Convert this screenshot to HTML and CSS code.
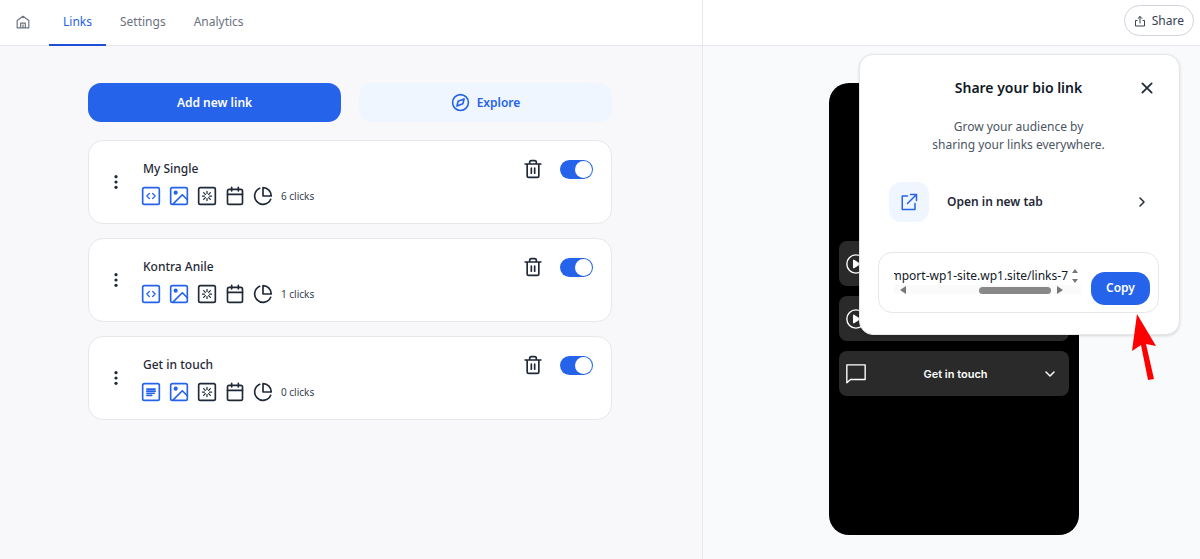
FILE: index.html
```
<!DOCTYPE html>
<html lang="en">
<head>
    <meta charset="UTF-8">
    <meta name="viewport" content="width=device-width, initial-scale=1.0">
    <title>Bio links</title>
    <link rel="stylesheet" href="styles.css">
</head>
<body>
    <!-- Icon set -->
    <svg class="sprite" aria-hidden="true">
        <symbol id="i-home" viewBox="0 0 24 24"><path d="M2 9.500 12 2l10 7.500V22H2zM8 22v-8h8v8M12 22v-5"/></symbol>
        <symbol id="i-compass" viewBox="0 0 24 24"><circle cx="12" cy="12" r="10"/><path d="M16.500 7.500 15 13.500l-7.500 3 1.500-6z"/></symbol>
        <symbol id="i-share" viewBox="0 0 24 24"><path d="M6 11H3v11h18V11h-3M12 16V3M8 7l4-4 4 4"/></symbol>
        <symbol id="i-code" viewBox="0 0 24 24"><rect x="2" y="2" width="20" height="20" rx="2"/><path d="M10 9l-3 3 3 3M14 9l3 3-3 3" stroke-width="1.500"/></symbol>
        <symbol id="i-text" viewBox="0 0 24 24"><rect x="2" y="2" width="20" height="20" rx="2"/><path d="M7 8.500h10M7 11h10M7 13.500h9M7 16h6"/></symbol>
        <symbol id="i-image" viewBox="0 0 24 24"><rect x="2" y="2" width="20" height="20" rx="2"/><circle cx="8" cy="8" r="1.500" fill="currentColor"/><path d="M5 21.500 16 10.500l6 6"/></symbol>
        <symbol id="i-spark" viewBox="0 0 24 24"><rect x="2" y="2" width="20" height="20" rx="2"/><path d="M12 6.500v2.500M12 15v2.500M6.500 12h2.500M15 12h2.500M8 8l2 2M14 14l2 2M8 16l2-2M14 10l2-2" stroke-width="1.500"/></symbol>
        <symbol id="i-calendar" viewBox="0 0 24 24"><rect x="3" y="4" width="18" height="18" rx="2"/><path d="M3 10h18M8 1.500V6M16 1.500V6"/></symbol>
        <symbol id="i-pie" viewBox="0 0 24 24"><path d="M21.200 15.900A10 10 0 1 1 8 2.800M22 12A10 10 0 0 0 12 2v10z"/></symbol>
        <symbol id="i-trash" viewBox="0 0 24 24"><path d="M2.500 6h19M19 6v14a2 2 0 0 1-2 2H7a2 2 0 0 1-2-2V6M8 6V4a2 2 0 0 1 2-2h4a2 2 0 0 1 2 2v2M10 11v6M14 11v6"/></symbol>
        <symbol id="i-dots" viewBox="0 0 24 24"><g fill="currentColor" stroke="none"><circle cx="12" cy="4" r="2.400"/><circle cx="12" cy="12" r="2.400"/><circle cx="12" cy="20" r="2.400"/></g></symbol>
        <symbol id="i-close" viewBox="0 0 24 24"><path d="M4 4l16 16M20 4 4 20"/></symbol>
        <symbol id="i-external" viewBox="0 0 24 24"><path d="M10 4H3v18h17v-8M14 2h8v8M22 2 10 14"/></symbol>
        <symbol id="i-right" viewBox="0 0 24 24"><path d="M8 4l8 8-8 8"/></symbol>
        <symbol id="i-down" viewBox="0 0 24 24"><path d="M4 8l8 8 8-8"/></symbol>
        <symbol id="i-play" viewBox="0 0 24 24"><circle cx="12" cy="12" r="10"/><path d="M9.500 8v8l6.500-4z" fill="currentColor"/></symbol>
        <symbol id="i-chat" viewBox="0 0 24 24"><path d="M2 2h20v16H6l-4 3.500z"/></symbol>
    </svg>

    <div class="app">
        <main class="editor">
            <nav class="topbar">
                <a class="tab home" href="#" aria-label="Home"><svg class="icon"><use href="#i-home"/></svg></a>
                <a class="tab active" href="#">Links</a>
                <a class="tab" href="#">Settings</a>
                <a class="tab" href="#">Analytics</a>
            </nav>

            <div class="content">
                <div class="actions">
                    <button class="btn primary" type="button">Add new link</button>
                    <button class="btn light" type="button"><svg class="icon"><use href="#i-compass"/></svg>Explore</button>
                </div>

                <article class="card">
                    <button class="icon-btn" type="button" aria-label="Move"><svg class="icon dots"><use href="#i-dots"/></svg></button>
                    <div class="card-main">
                        <h2>My Single</h2>
                        <div class="tools">
                            <button class="icon-btn blue" type="button" aria-label="Embed"><svg class="icon"><use href="#i-code"/></svg></button>
                            <button class="icon-btn blue" type="button" aria-label="Image"><svg class="icon"><use href="#i-image"/></svg></button>
                            <button class="icon-btn" type="button" aria-label="Highlight"><svg class="icon"><use href="#i-spark"/></svg></button>
                            <button class="icon-btn" type="button" aria-label="Schedule"><svg class="icon"><use href="#i-calendar"/></svg></button>
                            <button class="icon-btn" type="button" aria-label="Stats"><svg class="icon"><use href="#i-pie"/></svg></button>
                            <span>6 clicks</span>
                        </div>
                    </div>
                    <div class="card-side">
                        <button class="icon-btn" type="button" aria-label="Delete"><svg class="icon"><use href="#i-trash"/></svg></button>
                        <input class="toggle" type="checkbox" aria-label="Show My Single" checked>
                    </div>
                </article>

                <article class="card">
                    <button class="icon-btn" type="button" aria-label="Move"><svg class="icon dots"><use href="#i-dots"/></svg></button>
                    <div class="card-main">
                        <h2>Kontra Anile</h2>
                        <div class="tools">
                            <button class="icon-btn blue" type="button" aria-label="Embed"><svg class="icon"><use href="#i-code"/></svg></button>
                            <button class="icon-btn blue" type="button" aria-label="Image"><svg class="icon"><use href="#i-image"/></svg></button>
                            <button class="icon-btn" type="button" aria-label="Highlight"><svg class="icon"><use href="#i-spark"/></svg></button>
                            <button class="icon-btn" type="button" aria-label="Schedule"><svg class="icon"><use href="#i-calendar"/></svg></button>
                            <button class="icon-btn" type="button" aria-label="Stats"><svg class="icon"><use href="#i-pie"/></svg></button>
                            <span>1 clicks</span>
                        </div>
                    </div>
                    <div class="card-side">
                        <button class="icon-btn" type="button" aria-label="Delete"><svg class="icon"><use href="#i-trash"/></svg></button>
                        <input class="toggle" type="checkbox" aria-label="Show Kontra Anile" checked>
                    </div>
                </article>

                <article class="card">
                    <button class="icon-btn" type="button" aria-label="Move"><svg class="icon dots"><use href="#i-dots"/></svg></button>
                    <div class="card-main">
                        <h2>Get in touch</h2>
                        <div class="tools">
                            <button class="icon-btn blue" type="button" aria-label="Form"><svg class="icon"><use href="#i-text"/></svg></button>
                            <button class="icon-btn blue" type="button" aria-label="Image"><svg class="icon"><use href="#i-image"/></svg></button>
                            <button class="icon-btn" type="button" aria-label="Highlight"><svg class="icon"><use href="#i-spark"/></svg></button>
                            <button class="icon-btn" type="button" aria-label="Schedule"><svg class="icon"><use href="#i-calendar"/></svg></button>
                            <button class="icon-btn" type="button" aria-label="Stats"><svg class="icon"><use href="#i-pie"/></svg></button>
                            <span>0 clicks</span>
                        </div>
                    </div>
                    <div class="card-side">
                        <button class="icon-btn" type="button" aria-label="Delete"><svg class="icon"><use href="#i-trash"/></svg></button>
                        <input class="toggle" type="checkbox" aria-label="Show Get in touch" checked>
                    </div>
                </article>
            </div>
        </main>

        <aside class="preview">
            <div class="topbar end">
                <button class="share-btn" type="button"><svg class="icon"><use href="#i-share"/></svg>Share</button>
            </div>

            <div class="stage">
                <div class="phone">
                    <button class="phone-link" type="button" aria-label="Play"><svg class="icon"><use href="#i-play"/></svg></button>
                    <button class="phone-link" type="button" aria-label="Play"><svg class="icon"><use href="#i-play"/></svg></button>
                    <button class="phone-link" type="button">
                        <svg class="icon"><use href="#i-chat"/></svg>
                        <span>Get in touch</span>
                        <svg class="icon small"><use href="#i-down"/></svg>
                    </button>
                </div>
            </div>

            <section class="popover">
                <header class="popover-head">
                    <h1>Share your bio link</h1>
                    <button class="icon-btn" type="button" aria-label="Close"><svg class="icon"><use href="#i-close"/></svg></button>
                </header>
                <p>Grow your audience by<br>sharing your links everywhere.</p>
                <a class="open-link" href="#">
                    <span class="open-icon"><svg class="icon"><use href="#i-external"/></svg></span>
                    <span class="open-label">Open in new tab</span>
                    <svg class="icon small"><use href="#i-right"/></svg>
                </a>
                <div class="copy-box">
                    <div class="url">
                        <div class="url-row">
                            <input type="text" value="import-wp1-site.wp1.site/links-7" aria-label="Bio link" dir="rtl" readonly>
                            <svg class="spin" viewBox="0 0 6 14"><path d="M3 0l3 4H0zM3 14l3-4H0z"/></svg>
                        </div>
                        <div class="scroll">
                            <svg viewBox="0 0 6 8"><path d="M6 0v8L0 4z"/></svg>
                            <div class="thumb"></div>
                            <svg viewBox="0 0 6 8"><path d="M0 0v8l6-4z"/></svg>
                        </div>
                    </div>
                    <button class="copy-btn" type="button">Copy</button>
                </div>
                <svg class="pointer" viewBox="0 0 24 66" aria-hidden="true"><path d="M5 0 24 32 14 30 22 65 16 66 9 31 0 37z"/></svg>
            </section>
        </aside>
    </div>
</body>
</html>
```

FILE: styles.css
```
* {
    box-sizing: border-box;
}

body {
    margin: 0;
    font-family: "Noto Sans", sans-serif;
    font-size: 12px;
    line-height: 18px;
    color: #374151;
}

button, input {
    font: inherit;
    color: inherit;
}

button {
    padding: 0;
    border: none;
    background: none;
    cursor: pointer;
}

a {
    color: inherit;
    text-decoration: none;
}

h1, h2, p {
    margin: 0;
}

.sprite {
    display: none;
}

.icon {
    display: block;
    flex: none;
    width: 20px;
    height: 20px;
    fill: none;
    stroke: currentColor;
    stroke-width: 2;
    stroke-linecap: round;
    stroke-linejoin: round;
}

.icon.small {
    width: 12px;
    height: 12px;
    stroke-width: 3;
}

.icon-btn {
    color: #1f2937;
}

.icon-btn.blue {
    color: #2563eb;
}

.app {
    display: grid;
    grid-template-columns: 703fr 497fr;
    min-height: 100vh;
}

.editor {
    background-color: #f8f8fb;
    border-right: 1px solid #e5e7eb;
}

.preview {
    position: relative;
    background-color: #f8fafc;
}

/* Top bar */
.topbar {
    display: flex;
    height: 46px;
    background-color: #fff;
    border-bottom: 1px solid #e5e7eb;
}

.topbar.end {
    align-items: center;
    justify-content: flex-end;
    padding: 0 6px 4px 0;
}

.tab {
    display: flex;
    align-items: center;
    height: 46px;
    padding: 0 14px;
    color: #6b7280;
    border-bottom: 2px solid transparent;
}

.tab.home {
    padding-left: 16px;
    padding-right: 19px;
}

.tab.home .icon {
    width: 14px;
    height: 14px;
}

.tab.active {
    color: #2563eb;
    border-color: #1d4ed8;
}

.share-btn {
    display: flex;
    align-items: center;
    gap: 6px;
    height: 31px;
    padding: 0 9px;
    border: 1px solid #d1d5db;
    border-radius: 16px;
    background-color: #fff;
}

.share-btn .icon {
    width: 12px;
    height: 12px;
}

/* Links list */
.content {
    display: flex;
    flex-direction: column;
    gap: 14px;
    max-width: 526px;
    margin: 0 auto;
    padding: 37px 2px 37px 0;
}

.actions {
    display: grid;
    grid-template-columns: 1fr 1fr;
    gap: 18px;
    padding-bottom: 4px;
}

.btn {
    display: flex;
    align-items: center;
    justify-content: center;
    gap: 7px;
    height: 39px;
    border-radius: 13px;
    font-weight: 600;
}

.btn .icon {
    width: 19px;
    height: 19px;
}

.btn.primary {
    background-color: #2563eb;
    color: #fff;
}

.btn.light {
    background-color: #eff6ff;
    color: #2563eb;
}

.card {
    display: flex;
    align-items: center;
    height: 84px;
    padding: 0 18px;
    background-color: #fff;
    border: 1px solid #e5e7eb;
    border-radius: 15px;
}

.card .dots {
    width: 18px;
    height: 16px;
}

.card-main {
    flex: 1;
    padding: 2px 0 0 16px;
}

.card h2 {
    padding-left: 2px;
    font-size: 12px;
    font-weight: 500;
    color: #1f2937;
}

.tools {
    display: flex;
    align-items: center;
    gap: 8px;
    padding-top: 8px;
    font-size: 10px;
}

.card-side {
    display: flex;
    align-self: flex-start;
    align-items: center;
    gap: 17px;
    padding-top: 18px;
}

.toggle {
    appearance: none;
    display: flex;
    justify-content: flex-start;
    width: 33px;
    height: 19px;
    margin: 0;
    padding: 1px;
    border-radius: 10px;
    background-color: #d1d5db;
}

.toggle:checked {
    justify-content: flex-end;
    background-color: #2563eb;
}

.toggle::before {
    content: "";
    width: 17px;
    height: 17px;
    border-radius: 50%;
    background-color: #fff;
}

/* Phone preview */
.stage {
    padding: 37px 0 24px 4px;
}

.phone {
    display: flex;
    flex-direction: column;
    gap: 10px;
    width: 250px;
    height: 452px;
    margin: 0 auto;
    padding: 158px 10px 0;
    border-radius: 20px;
    background-color: #000;
}

.phone-link {
    display: flex;
    align-items: center;
    justify-content: space-between;
    height: 45px;
    padding: 0 12px 0 6px;
    border-radius: 8px;
    background-color: #2a2a2a;
    color: #fff;
    font-family: Inter, sans-serif;
    font-size: 11px;
    font-weight: 600;
}

.phone-link .icon {
    width: 22px;
    height: 22px;
    stroke-width: 1.5;
}

.phone-link .icon.small {
    width: 12px;
    height: 12px;
    stroke-width: 3;
}

/* Share popover */
.popover {
    position: absolute;
    top: 54px;
    right: 20px;
    width: 321px;
    padding: 24px 20px 21px 18px;
    border: 1px solid #e5e7eb;
    border-radius: 14px;
    background-color: #fff;
    box-shadow: 0 1px 3px rgba(0, 0, 0, 0.15);
}

.popover-head {
    display: grid;
    grid-template-columns: 24px 1fr 24px;
    justify-items: center;
    align-items: center;
}

.popover-head h1 {
    grid-column: 2;
    font-size: 14px;
    font-weight: 600;
    color: #111827;
}

.popover-head .icon {
    width: 14px;
    height: 14px;
    stroke-width: 3;
}

.popover p {
    padding: 21px 0 28px;
    text-align: center;
    color: #4b5563;
}

.open-link {
    display: flex;
    align-items: center;
    gap: 18px;
    padding: 0 11px;
    font-weight: 600;
    color: #1f2937;
}

.open-icon {
    padding: 11px;
    border-radius: 12px;
    background-color: #eff6ff;
    color: #2563eb;
}

.open-icon .icon {
    width: 18px;
    height: 18px;
}

.open-label {
    flex: 1;
}

.copy-box {
    display: flex;
    align-items: center;
    gap: 10px;
    margin-top: 30px;
    height: 61px;
    padding: 11px 8px 0 15px;
    border: 1px solid #e5e7eb;
    border-radius: 14px;
}

.url {
    flex: 1;
    min-width: 0;
    align-self: flex-start;
}

.url-row {
    display: flex;
    align-items: center;
    gap: 4px;
    padding: 3px 3px 0 0;
}

.url input {
    flex: 1;
    min-width: 0;
    padding: 0;
    border: none;
    outline: none;
    background: none;
    color: #111827;
}

.spin {
    width: 6px;
    height: 14px;
    fill: #777;
}

.scroll {
    display: flex;
    align-items: center;
    gap: 6px;
    padding: 1px 18px 0 6px;
    background-color: #fafafa;
}

.scroll svg {
    width: 6px;
    height: 8px;
    fill: #777;
}

.thumb {
    width: 72px;
    height: 7px;
    margin-left: auto;
    border-radius: 4px;
    background-color: #888;
}

.copy-btn {
    width: 59px;
    height: 33px;
    border-radius: 14px;
    background-color: #2563eb;
    color: #fff;
    font-weight: 600;
}

/* Red arrow pointing at the Copy button */
.pointer {
    position: absolute;
    right: 23px;
    bottom: -46px;
    width: 24px;
    height: 66px;
    fill: #f00;
}
```
